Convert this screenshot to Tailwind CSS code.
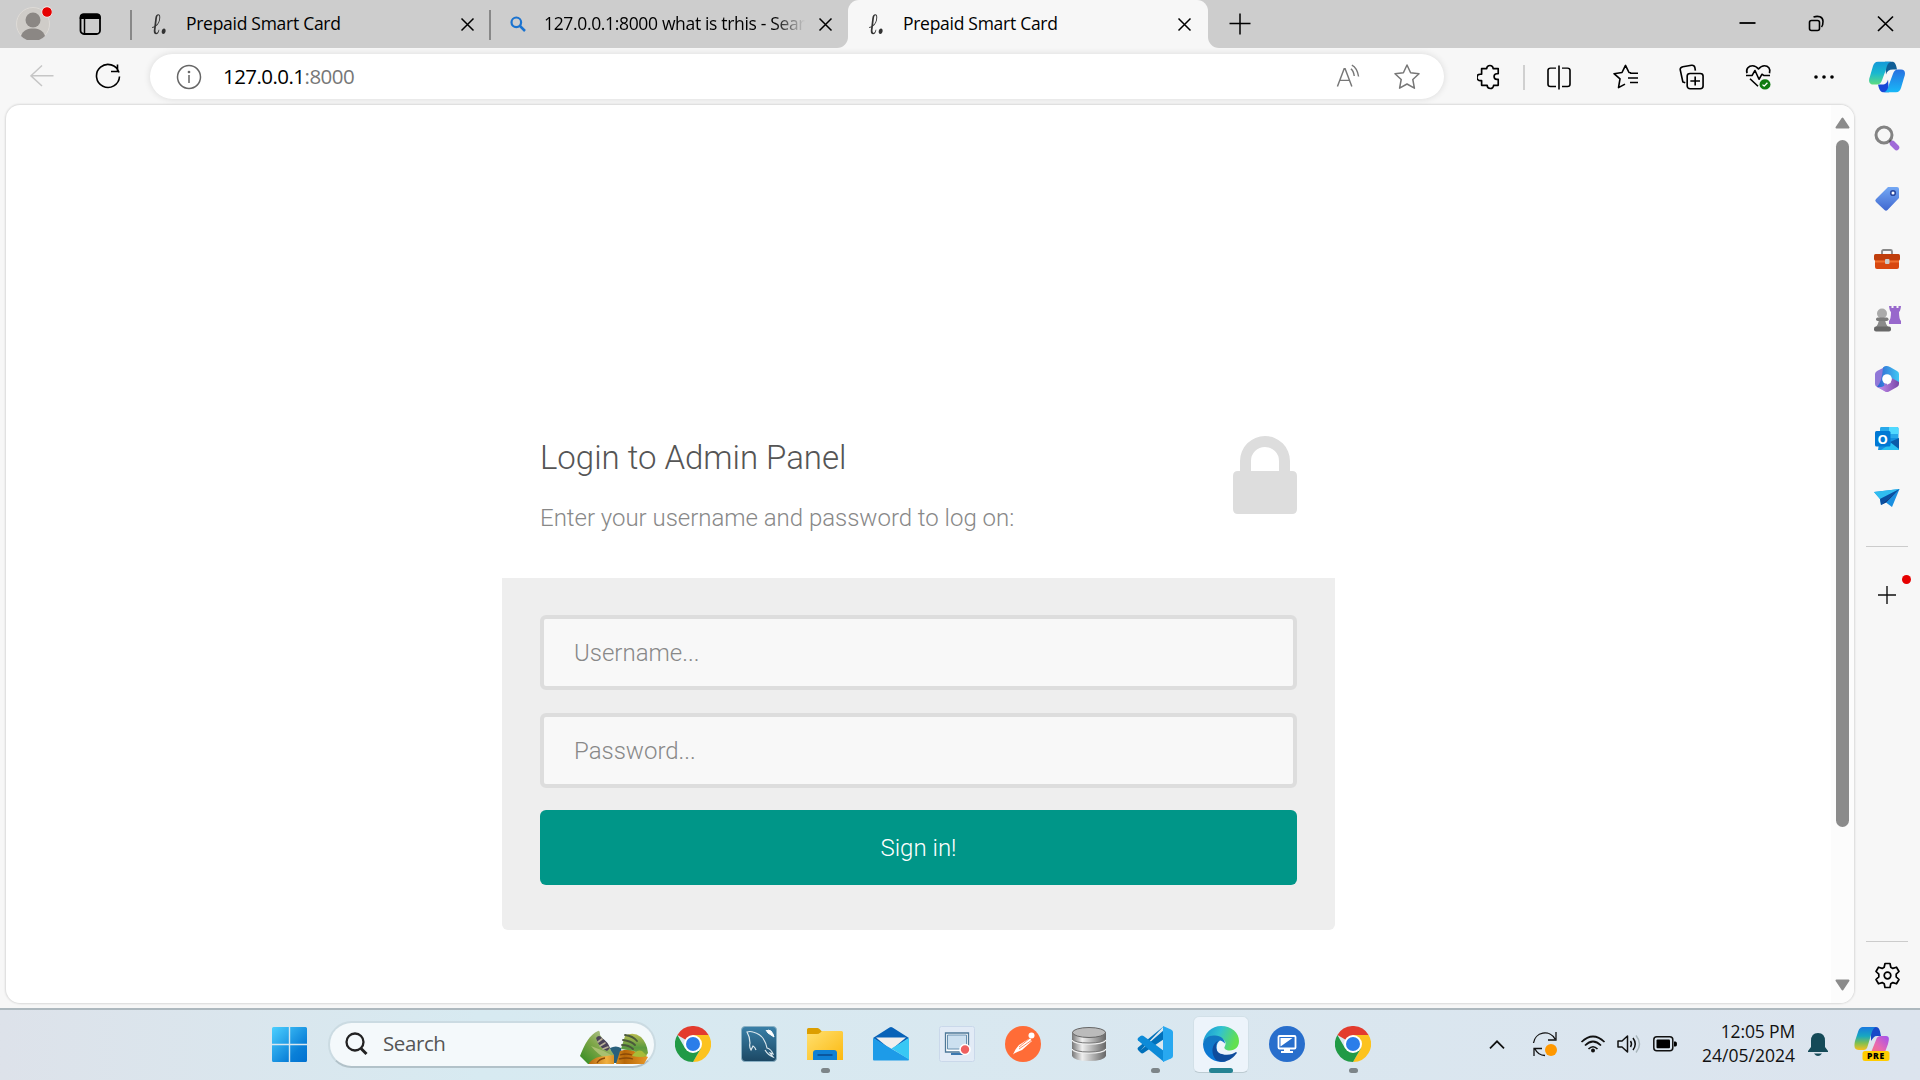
<!DOCTYPE html>
<html lang="en">
<head>
<meta charset="utf-8">
<title>Prepaid Smart Card</title>
<script src="https://cdn.jsdelivr.net/npm/@tailwindcss/browser@4"></script>
</head>
<body class="w-[1920px] h-[1080px] overflow-hidden flex flex-col bg-[#f7f7f7] font-['Open_Sans','Noto_Sans',sans-serif] text-black">

<!-- Tab strip -->
<header class="h-12 shrink-0 bg-[#cdcdcd] flex items-center">
  <div class="w-[130px] h-full flex items-center pl-4 shrink-0">
    <svg class="w-9 h-9 -mt-1" viewBox="0 0 36 36"><circle cx="17" cy="20" r="16.500" fill="#cfccc8" stroke="#dedbd7"/><circle cx="17" cy="16" r="7.500" fill="#8b8784"/><path d="M5 32C7 26 12 24.500 17 24.500S27 26 29 32A16.500 16.500 0 0 1 5 32Z" fill="#8b8784"/><circle cx="31" cy="8" r="5.300" fill="#e60000" stroke="#eee" stroke-width="1"/></svg>
    <svg class="w-6 h-6 ml-[26px]" viewBox="0 0 24 24"><rect x="2.500" y="2.500" width="19.500" height="19.500" rx="3.500" fill="none" stroke="#000" stroke-width="1.800"/><path d="M1.700 7V5a3.500 3.500 0 0 1 3.500-3.500h14A3.500 3.500 0 0 1 22.800 5v2Z"/><path d="M6.500 7v15" stroke="#000" stroke-width="1.500"/></svg>
  </div>
  <div class="w-[2px] h-[30px] mt-0.5 bg-[#888] shrink-0"></div>
  <div class="w-[358px] h-full shrink-0 flex items-center pl-5 pr-4">
    <span class="w-[34px] h-full leading-[47px] font-['DejaVu_Serif',serif] italic font-bold text-[21px] tracking-[-1px] text-[#333] scale-y-140">ℓ.</span>
    <span class="flex-1 -mt-0.5 text-[17.5px] tracking-[-0.28px] whitespace-nowrap">Prepaid Smart Card</span>
    <svg class="w-[15px] h-[15px] mt-px mr-[-1px]" viewBox="0 0 15 15"><path d="M1.500 1.500l12 12M13.500 1.500l-12 12" stroke="#000" stroke-width="1.500"/></svg>
  </div>
  <div class="w-[2px] h-[30px] mt-0.5 -ml-px bg-[#888] shrink-0"></div>
  <div class="w-[357px] h-full shrink-0 flex items-center pl-[19px] pr-[15px]">
    <svg class="w-4 h-4 mr-[18px]" viewBox="0 0 16 16"><circle cx="6.300" cy="6.300" r="4.800" fill="none" stroke="#1a73d0" stroke-width="2.200"/><path d="M10 10l5 5" stroke="#1a73d0" stroke-width="2.500"/></svg>
    <span class="flex-1 -mt-0.5 overflow-hidden text-[17.5px] tracking-[-0.34px] whitespace-nowrap [mask-image:linear-gradient(to_right,black_88%,transparent)]">127.0.0.1:8000 what is trhis - Search</span>
    <svg class="w-[15px] h-[15px] ml-[13px] mt-px" viewBox="0 0 15 15"><path d="M1.500 1.500l12 12M13.500 1.500l-12 12" stroke="#000" stroke-width="1.500"/></svg>
  </div>
  <div class="w-[360px] h-full shrink-0 flex items-center pl-[21px] pr-[17px] bg-[#f7f7f7] rounded-t-[11px] relative">
    <svg class="absolute -left-[11px] bottom-0 w-[11px] h-[11px]" viewBox="0 0 11 11"><path d="M11 0v11H0A11 11 0 0 0 11 0Z" fill="#f7f7f7"/></svg>
    <svg class="absolute -right-[11px] bottom-0 w-[11px] h-[11px]" viewBox="0 0 11 11"><path d="M0 0v11h11A11 11 0 0 1 0 0Z" fill="#f7f7f7"/></svg>
    <span class="w-[34px] h-full leading-[47px] font-['DejaVu_Serif',serif] italic font-bold text-[21px] tracking-[-1px] text-[#333] scale-y-140">ℓ.</span>
    <span class="flex-1 -mt-0.5 text-[17.5px] tracking-[-0.28px] whitespace-nowrap">Prepaid Smart Card</span>
    <svg class="w-[15px] h-[15px] mt-px mr-[-1px]" viewBox="0 0 15 15"><path d="M1.500 1.500l12 12M13.500 1.500l-12 12" stroke="#000" stroke-width="1.500"/></svg>
  </div>
  <svg class="w-[22px] h-[22px] ml-[21px] -mt-px shrink-0" viewBox="0 0 22 22"><path d="M11 .500v21M.500 10.500h21" stroke="#000" stroke-width="1.500"/></svg>
  <div class="flex ml-auto items-center">
    <svg class="w-[69px] h-12" viewBox="0 0 69 48"><path d="M26.500 23h16" stroke="#000" stroke-width="1.800"/></svg>
    <svg class="w-[69px] h-12" viewBox="0 0 69 48" fill="none" stroke="#000" stroke-width="1.600"><rect x="27.500" y="20.500" width="10" height="10" rx="2"/><path d="M31.500 17c4.500-1.500 9.500-.500 9.500 4.500 0 3 0 4-1.500 5.500"/></svg>
    <svg class="w-[69px] h-12" viewBox="0 0 69 48"><path d="M27 16.500l15 14.500M42 16.500l-15 14.500" stroke="#000" stroke-width="1.700"/></svg>
  </div>
</header>

<!-- Toolbar -->
<nav class="h-[57px] shrink-0 flex items-start">
  <svg class="w-6 h-6 ml-[30px] mt-4" viewBox="0 0 24 24" fill="none" stroke="#c6c6c6" stroke-width="1.500"><path d="M23.500 11.800H.800M12 1.500L1 11.800 12 22"/></svg>
  <svg class="w-[26px] h-[26px] ml-[41px] mt-[15px]" viewBox="0 0 26 26" fill="none" stroke="#000" stroke-width="1.600"><path d="M24 9.500A11.500 11.500 0 1 0 24.500 13.500M22.500 1.500v7H16"/></svg>
  <div class="w-[1294px] h-[45px] mt-1.5 ml-[29px] bg-white rounded-full shadow-[0_0_7px_rgba(0,0,0,0.12)] flex items-center pl-[26px]">
    <svg class="w-[26px] h-[26px]" viewBox="0 0 26 26" fill="none" stroke="#666" stroke-width="1.500"><circle cx="13" cy="13" r="11.500"/><path d="M13 11v8"/><circle cx="13" cy="8" r=".600" fill="#666"/></svg>
    <span class="ml-[21px] -mt-px flex-1 text-[20.5px] tracking-[-0.55px] whitespace-nowrap leading-none">127.0.0.1<span class="text-[#777]">:8000</span></span>
    <svg class="w-6 h-[25px] mr-[34px]" viewBox="0 0 24 26" fill="none" stroke="#777" stroke-width="1.500"><path d="M1 23.500L8 5h1l7 18.500M3.500 17h10M15 5c2 1.500 3 3.500 3.500 7.500M16 1.200c4 2 6 6 7 11.800"/></svg>
    <svg class="w-[26px] h-[26px] mr-[24px]" viewBox="0 0 26 26" fill="none" stroke="#777" stroke-width="1.500" stroke-linejoin="round"><path d="M13 1l3.600 7.700 8.400 1.100-6.200 5.700 1.600 8.700L13 20l-7.400 4.200 1.600-8.700L1 9.800l8.400-1.100Z"/></svg>
  </div>
  <svg class="w-6 h-[26px] ml-[33px] mt-4" viewBox="0 2 26 28" fill="none" stroke="#000" stroke-width="1.800" stroke-linejoin="round"><path d="M5 7h5.500a3.500 3.500 0 1 1 7 0H23v5.500h-1.500a3 3 0 0 0 0 6H23V25h-5a3.500 3.500 0 0 1-7 0H5v-5H3.500a3.500 3.500 0 0 1 0-7H5Z"/></svg>
  <div class="w-[2px] h-[25px] mt-[17px] ml-[22px] bg-[#d0d0d0]"></div>
  <svg class="w-[26px] h-[25px] mt-[17px] ml-[21px]" viewBox="0 0 26 28" preserveAspectRatio="none" fill="none" stroke="#000" stroke-width="1.600"><path d="M10 3.500H4.500a2.500 2.500 0 0 0-2.500 2.500v15.500A2.500 2.500 0 0 0 4.500 24H10M16 3.500h5.500A2.500 2.500 0 0 1 24 6v15.500a2.500 2.500 0 0 1-2.500 2.500H16M13 .500v27"/></svg>
  <svg class="w-[26px] h-[26px] mt-4 ml-[41px]" viewBox="0 0 26 28" preserveAspectRatio="none" fill="none" stroke="#000" stroke-width="1.600" stroke-linejoin="round"><path d="M18 9.500l-2-.300L12.500 1.500 9 9.200l-8 1.200 6 5.600-1.500 9.500 6.500-3.800M17 10h8M15 15h10M17 20h8"/></svg>
  <svg class="w-[26px] h-[26px] mt-4 ml-10" viewBox="0 0 27 29" preserveAspectRatio="none" fill="none" stroke="#000" stroke-width="1.700"><rect x="8.500" y="10.500" width="16.500" height="17" rx="3"/><path d="M16.800 14v10M11.800 19h10M6.500 21L4 20 1.300 6.500C1 4.500 2 3.500 4 3l9-1.500c2-.300 3 .500 3.500 2.500l.500 3.500"/></svg>
  <svg class="w-[27px] h-[27px] mt-[15px] ml-10" viewBox="0 0 27 29" preserveAspectRatio="none" fill="none" stroke="#000" stroke-width="1.600" stroke-linejoin="round"><path d="M2 11C.500 6 4 3 7.500 3c3 0 4.500 1.500 6 3.500C15 4.500 16.500 3 19.500 3 23 3 26 6 24.500 11M1 13.500h6l3-5.500 4 9.500 3-5.500 2 1.500h6M5 17l8 8"/><circle cx="20" cy="23" r="5.500" fill="#107c10" stroke="none"/><path d="M17.500 23.200l1.700 1.700 3.200-3.700" stroke="#fff" stroke-width="1.300"/></svg>
  <svg class="w-6 h-6 mt-[17px] ml-10" viewBox="0 0 24 24"><circle cx="4" cy="12" r="1.800"/><circle cx="12" cy="12" r="1.800"/><circle cx="20" cy="12" r="1.800"/></svg>
  <svg class="w-9 h-[32px] mt-[13px] ml-[33px]" viewBox="0 0 36 38" preserveAspectRatio="none">
    <defs><linearGradient id="ca" x1="0" y1="0" x2="0" y2="1"><stop offset="0" stop-color="#1498d8"/><stop offset=".5" stop-color="#19b8d0"/><stop offset="1" stop-color="#5edc80"/></linearGradient><linearGradient id="cb" x1="0" y1="0" x2="0" y2="1"><stop offset="0" stop-color="#2870e0"/><stop offset="1" stop-color="#18b8f8"/></linearGradient></defs>
    <path d="M16 1h7c3 0 4 3 5 9h-4c-4 0-6 2-7 6Z" fill="#105e96"/><path d="M20 37h-6c-3 0-4-4-5-9h4c4 0 5-2 6-6Z" fill="#1848d8"/>
    <path d="M9 1h13c-3 1-4 4-5 9l-4 13c-1 3-2 5-5 5H5c-5 0-6-4-4-10L4 6c1-3 2-5 5-5Z" fill="url(#ca)"/>
    <path d="M27 37H15c3-1 4-4 5-9l4-13c1-3 2-5 5-5h3c4 0 5 4 3 10l-3 12c-1 3-2 5-5 5Z" fill="url(#cb)"/>
  </svg>
</nav>

<div class="h-[903px] shrink-0 flex">
  <!-- Web page -->
  <main class="ml-1.5 w-[1848px] h-[898px] bg-white rounded-[14px] shadow-[0_0_2px_1px_rgba(0,0,0,0.12)] flex overflow-hidden">
    <div class="w-[1825px] pl-[496px] pt-[315px] font-['Roboto',sans-serif] font-light">
      <section class="w-[833px]">
        <div class="h-[158px] px-[38px] flex justify-between">
          <div class="pt-[19px]">
            <h1 class="text-[33px] leading-[40px] mt-[-1px] tracking-[-0.03px] text-[#555] whitespace-nowrap">Login to Admin Panel</h1>
            <p class="mt-[18px] text-[24px] leading-[44px] tracking-[-0.02px] text-[#888] whitespace-nowrap">Enter your username and password to log on:</p>
          </div>
          <svg class="w-16 h-[78px] mt-4" viewBox="0 0 64 78"><path fill="#ddd" fill-rule="evenodd" d="M7 35V25a25 25 0 0 1 50 0v10h2q5 0 5 5v33q0 5-5 5H5q-5 0-5-5V40q0-5 5-5ZM18 35h28V25a14 14 0 0 0-28 0Z"/></svg>
        </div>
        <form class="h-[352px] bg-[#eee] rounded-b-[6px] px-[38px] pt-[37px] flex flex-col">
          <input type="text" placeholder="Username..." class="h-[75px] w-full border-4 border-[#ddd] rounded-[6px] bg-[#f8f8f8] px-[30px] text-[24px] placeholder:text-[#888]">
          <input type="text" placeholder="Password..." class="mt-[23px] h-[75px] w-full border-4 border-[#ddd] rounded-[6px] bg-[#f8f8f8] px-[30px] text-[24px] placeholder:text-[#888]">
          <button type="button" class="mt-[22px] h-[75px] w-full rounded-[6px] bg-[#009688] text-white text-[24px]">Sign in!</button>
        </form>
      </section>
    </div>
    <div class="w-[23px] bg-[#fcfcfc] flex flex-col items-center pt-[12px]">
      <svg class="w-[15px] h-[12px] shrink-0" viewBox="0 0 15 12"><path d="M7.500 1.500L13.500 10.500h-12Z" fill="#8b8b8b" stroke="#8b8b8b" stroke-width="2" stroke-linejoin="round"/></svg>
      <div class="w-[13px] h-[687px] mt-[11px] rounded-full bg-[#8b8b8b]"></div>
      <svg class="w-[15px] h-[12px] mt-auto mb-[12px] shrink-0" viewBox="0 0 15 12"><path d="M7.500 10.500L13.500 1.500h-12Z" fill="#8b8b8b" stroke="#8b8b8b" stroke-width="2" stroke-linejoin="round"/></svg>
    </div>
  </main>

  <!-- Edge sidebar -->
  <aside class="w-[66px] h-full flex flex-col items-center">
    <div class="flex flex-col items-center gap-8 pt-[19px]">
      <svg class="w-7 h-7 mb-px" viewBox="0 0 28 28"><circle cx="11" cy="11" r="8" fill="none" stroke="#838383" stroke-width="3"/><path d="M16.500 16.500l3.500 3.500" stroke="#555" stroke-width="2.500"/><path d="M19.500 19.500l4 4" stroke="#a06ad8" stroke-width="5.500" stroke-linecap="round"/></svg>
      <svg class="w-7 h-7" viewBox="0 0 28 28"><defs><linearGradient id="tg" x1="0" y1="0" x2="0" y2="1"><stop stop-color="#74a8f4"/><stop offset="1" stop-color="#4068d0"/></linearGradient></defs><path d="M15 2h9q2 0 2 2v9L14.500 25q-1.500 1.500-3 0L3 17q-1.500-1.500 0-3Z" fill="url(#tg)"/><circle cx="20" cy="8" r="2.300" fill="#fff" stroke="#2848a0" stroke-width="1.600"/></svg>
      <svg class="w-7 h-7" viewBox="0 -1 28 28"><path d="M9 9V5.500q0-1.500 1.500-1.500h7q1.500 0 1.500 1.500V9" fill="none" stroke="#888" stroke-width="1.800"/><path d="M2 13h24v8q0 2-2 2H4q-2 0-2-2Z" fill="#d84810"/><rect x="1" y="8" width="26" height="6.500" rx="1.500" fill="#c03e0c"/><path d="M2 14.500h24v2H2Z" fill="#f07030"/><rect x="12" y="13" width="4.500" height="5" rx="1" fill="#ccc"/></svg>
      <svg class="w-7 h-7" viewBox="0 0 28 28"><circle cx="9" cy="8.500" r="5" fill="#aaa"/><path d="M6 13h6q0 6 4 10H2q4-4 4-10Z" fill="#8a8a8a"/><rect x="3" y="12.500" width="12.500" height="3.500" rx="1.700" fill="#7b7b7b"/><rect x="1" y="21.500" width="17" height="5" rx="2" fill="#686868"/><path d="M16 1h2.500v2h2V1h3v2h2V1H28q-.500 5-2 6 0 7 2 9v3H16v-3q2-2 2-9-1.500-1-2-6Z" fill="#9868cc"/></svg>
      <svg class="w-7 h-7" viewBox="0 0 28 28"><defs><linearGradient id="mb" x1="0" y1="0" x2="1" y2="0"><stop stop-color="#3060d0"/><stop offset="1" stop-color="#40c8f4"/></linearGradient><linearGradient id="mp" x1="0" y1="0" x2="1" y2="0"><stop stop-color="#c890f0"/><stop offset="1" stop-color="#7848a8"/></linearGradient></defs><path d="M14 1L4 6Q2 7.500 2 9v10q0 2 2 3l10 5V14Z" fill="#9078d8"/><path d="M10 2.500Q13 0 17 2l7 4q2 1 2 3v9l-8-5-7-3v11q-4 2-7 1 5-5 6-19.500Z" fill="url(#mb)"/><path d="M26 17v2q0 2-2 3l-8 4.500q-2 1-4 0L4.500 22q4 1 7-1l6-3 1-5Z" fill="url(#mp)"/><circle cx="14" cy="14" r="4.800" fill="#fff"/></svg>
      <svg class="w-7 h-7" viewBox="0 0 28 28"><path d="M8 2h16q1.500 0 1.500 1.500V16H7V3.500Q7 2 8 2Z" fill="#28a8ea"/><path d="M16 2h8q1.500 0 1.500 1.500V9H16Z" fill="#50d9ff"/><path d="M7 13h19v12H5Z" fill="#1490df"/><path d="M26 13L8 25h17q1 0 1-1Z" fill="#28c0f0"/><path d="M26 13v11l-9-7Z" fill="#0a5ba8"/><rect x="2" y="6" width="15.500" height="15.500" rx="1.500" fill="#0078d4"/><text x="9.700" y="18.500" font-size="13" font-weight="700" fill="#fff" text-anchor="middle" font-family="Open Sans">O</text></svg>
      <svg class="w-7 h-7" viewBox="0 0 28 28"><path d="M1 7l25.500-3L19 22l-6-4.500L8 20l-1-6Z" fill="#1a8fe0"/><path d="M1 7l25.500-3L7 14Z" fill="#30bdf0"/><path d="M26.500 4L7 14l1 6Z" fill="#0a4fa0"/><path d="M26.500 4L8 20l5-2.500Z" fill="#12357a"/></svg>
    </div>
    <div class="w-[42px] h-px bg-[#ccc] mt-[33px]"></div>
    <div class="relative mt-[39px] -ml-px">
      <svg class="w-[18px] h-[18px]" viewBox="0 0 18 18"><path d="M9 0v18M0 9h18" stroke="#111" stroke-width="1.400"/></svg>
      <span class="absolute -top-[11px] left-[24px] w-[9px] h-[9px] rounded-full bg-[#e60000]"></span>
    </div>
    <div class="w-[42px] h-px bg-[#ccc] mt-auto mb-[20px]"></div>
    <svg class="w-[27px] h-[27px] mb-[19px]" viewBox="0 0 27 27" fill="none" stroke="#000" stroke-width="1.700" stroke-linejoin="round"><path d="M11 1.500h5l.800 3.700 2 1.200 3.700-1.200 2.500 4.300-2.800 2.600v2.800l2.800 2.600-2.500 4.300-3.700-1.200-2 1.200-.800 3.700h-5l-.800-3.700-2-1.200-3.700 1.200L2 17.500l2.800-2.600v-2.800L2 9.500l2.500-4.300 3.700 1.200 2-1.200Z"/><circle cx="13.500" cy="13.500" r="3.300"/></svg>
  </aside>
</div>

<!-- Taskbar -->
<footer class="h-[72px] pb-0.5 shrink-0 border-t-2 border-[#adb8be] bg-linear-to-r from-[#dde2ea] via-[#d7eaf1] via-25% to-[#dce4ee] flex items-center">
  <svg class="w-[35px] h-[35px] ml-[272px] shrink-0" viewBox="0 0 35 35"><defs><linearGradient id="win" gradientUnits="userSpaceOnUse" x1="0" y1="0" x2="35" y2="35"><stop stop-color="#4cd0ff"/><stop offset=".7" stop-color="#0a80d8"/><stop offset="1" stop-color="#0070d0"/></linearGradient></defs><path fill="url(#win)" d="M1.500 0H16.800v16.800H0V1.500Q0 0 1.500 0ZM18.200 0H33.500Q35 0 35 1.500V16.800H18.200ZM0 18.200h16.800V35H1.500Q0 35 0 33.500ZM18.200 18.200H35V33.500Q35 35 33.500 35H18.200Z"/></svg>
  <div class="w-[328px] h-[47px] ml-[21px] shrink-0 rounded-full bg-[#f4f9fb] border-2 border-[#cbdbe2] border-b-[#b2c2c9] flex items-center pl-[15px]">
    <svg class="w-6 h-6" viewBox="0 0 24 24" fill="none" stroke="#222"><circle cx="10" cy="10" r="8.500" stroke-width="2.300"/><path d="M16 16.500l5.500 5.500" stroke-width="3"/></svg>
    <span class="ml-[14px] -mt-px flex-1 text-[20.5px] tracking-[-0.4px] text-[#555]">Search</span>
    <svg class="w-[70px] h-[34px] mr-[5px] mt-[6px]" viewBox="0 0 70 34">
      <defs>
        <linearGradient id="hl" x1="0" y1="1" x2="1" y2="0"><stop stop-color="#2c8a1e"/><stop offset=".5" stop-color="#7fa648"/><stop offset="1" stop-color="#c4cfae"/></linearGradient>
        <linearGradient id="hr" x1="0" y1="0" x2="0" y2="1"><stop stop-color="#b8bc50"/><stop offset=".6" stop-color="#5a9a40"/><stop offset="1" stop-color="#8aac38"/></linearGradient>
        <linearGradient id="ho" x1="0" y1="0" x2="1" y2="0"><stop stop-color="#b86810"/><stop offset=".3" stop-color="#f0b040"/><stop offset=".6" stop-color="#b86808"/><stop offset="1" stop-color="#e89828"/></linearGradient>
      </defs>
      <path d="M31 18q6-3 11 0l2 15H34Z" fill="#28607c"/>
      <path d="M1 26C5 15 11 4 19 1q2-1 2 4l6 8 8 12-8 8-18 1Z" fill="url(#hl)"/>
      <path d="M17 8q3-4 6 0 6 4 8 10l-3 3q-8-3-11-13Z" fill="#4b4358"/><path d="M19 12l4-3M21 16l5-3M24 19l5-2" stroke="#b8b098" stroke-width="1.600" stroke-linecap="round"/>
      <path d="M12 16q12 4 22 10l-5 4Q18 24 12 16Z" fill="#a9c070"/>
      <path d="M10 33q6-7 17-7l8-1v9H10ZM37 34l4-13q8-3 14 0l14 6-4 7Z" fill="url(#ho)"/>
      <path d="M18 33q2-4 8-5M41 25q6-2 12 0M40 29q8-2 14 0" fill="none" stroke="#8a4a08" stroke-width="1.300"/>
      <path d="M42 19l4-13q8-5 16 1 6 6 7 16l-3 4-11-6Z" fill="url(#hr)"/>
      <path d="M46 5q8 1 12 6M44 10q8 1 12 5M43 15q7 0 11 4" fill="none" stroke="#4a5a3c" stroke-width="1.800" stroke-linecap="round"/>
      <path d="M53 26q5-7 10-5l5 5q-6 2-15 0Z" fill="#a8bc38"/>
    </svg>
  </div>

  <div class="flex ml-1 h-full items-center shrink-0 [&>div]:w-[66px] [&>div]:h-full [&>div]:flex [&>div]:justify-center [&>div]:items-center [&>div]:relative">
    <div><svg class="w-9 h-9" viewBox="0 0 36 36"><path d="M18 18L2.400 9A18 18 0 0 1 33.600 9Z" fill="#e33b2e"/><path d="M18 9h15.600A18 18 0 0 1 18 36L25.800 22.500Z" fill="#fcc31e"/><path d="M2.400 9A18 18 0 0 0 18 36l7.800-13.500L10.200 22.500Z" fill="#219a46"/><circle cx="18" cy="18" r="9" fill="#fff"/><circle cx="18" cy="18" r="7" fill="#2b7de9"/></svg></div>
    <div><svg class="w-9 h-9" viewBox="0 0 36 36"><defs><linearGradient id="my" x1="0" y1="0" x2="0" y2="1"><stop stop-color="#3a80a8"/><stop offset="1" stop-color="#1c4864"/></linearGradient></defs><rect x=".500" y=".500" width="35" height="35" rx="3.500" fill="url(#my)" stroke="#8ab0c4"/><path d="M15 24q-1-3-3-4-1 2-2 4-2-3-1-7 0-6-3-11 3-1 6 0 8 2 11 8 2 3 3 8 4 1 6 6l-3-1 3 4q-5-2-8-7" fill="none" stroke="#dce8ee" stroke-width="1.200"/><path d="M25 4l2 3 3 2 3 2-1-3-2-3-3-1" fill="#fff" stroke="#fff"/></svg></div>
    <div><svg class="w-9 h-9" viewBox="0 0 36 36"><defs><linearGradient id="fo" x1="0" y1="0" x2="1" y2="1"><stop stop-color="#ffe070"/><stop offset="1" stop-color="#fcb910"/></linearGradient></defs><path d="M0 3.500Q0 2 1.500 2h9q1.500 0 2.500 1.500L15.500 6 12 8H0Z" fill="#dc9e00"/><path d="M0 8h10q2 0 3.500-1.500L15 5h19.500Q36 5 36 6.500V34H0Z" fill="url(#fo)"/><path d="M6 34v-7q0-3 3-3h18q3 0 3 3v7Z" fill="#0f80d4"/><path d="M10.500 29h15" stroke="#0a4f94" stroke-width="1.700"/></svg><i class="absolute bottom-[5px] w-[9px] h-[5px] rounded-full bg-[#7d8589]"></i></div>
    <div><svg class="w-9 h-9" viewBox="0 0 36 36"><path d="M0 12L16.500 1.500q1.500-1 3 0L36 12l-18 12Z" fill="#0862b8"/><path d="M3 11.500h30L18 24Z" fill="#f1efee"/><path d="M0 12l36 21q0 1.500-1 1.500H1q-1 0-1-1Z" fill="#1d9be8"/><path d="M36 12v21.500L18.500 22.500Z" fill="#38c8f4"/></svg></div>
    <div><svg class="w-9 h-9" viewBox="0 0 36 36"><rect x=".500" y=".500" width="35" height="35" rx="2" fill="#e2ebf6" stroke="#cad8ea"/><path d="M6.500 7h23v19h-23Z" fill="#fff" stroke="#4e7898" stroke-width="1.300"/><path d="M8.500 9h19v14h-19Z" fill="#cce0f0" stroke="#6890b0"/><path d="M12 28h12" stroke="#3c78b0" stroke-width="2"/><circle cx="26" cy="23.500" r="5" fill="#f06060" stroke="#fff" stroke-width="1.600"/></svg></div>
    <div><svg class="w-9 h-9" viewBox="0 0 36 36"><circle cx="18" cy="18" r="18" fill="#ff6c37"/><circle cx="26.500" cy="9.500" r="3" fill="#fff"/><path d="M25 12l2 3-10 9-7 3-2 1.500 2.500-5L14 19Z" fill="#fff"/><path d="M25 12L14 21M27 14L14 23" stroke="#ff6c37" stroke-width=".8"/></svg></div>
    <div><svg class="w-9 h-9" viewBox="0 0 36 36"><defs><linearGradient id="db" x1="0" y1="0" x2="1" y2="0"><stop stop-color="#777"/><stop offset=".3" stop-color="#eee"/><stop offset="1" stop-color="#666"/></linearGradient></defs><path d="M1 6v24q2 5 17 5t17-5V6Z" fill="url(#db)"/><ellipse cx="18" cy="6.500" rx="16.500" ry="5" fill="#bbb" stroke="#666"/><path d="M1 14q3 4 17 4t17-4M1 23q3 4 17 4t17-4" fill="none" stroke="#eee" stroke-width="1.500"/><path d="M1 13q3 4 17 4t17-4M1 22q3 4 17 4t17-4" fill="none" stroke="#777"/></svg></div>
    <div><svg class="w-9 h-9" viewBox="0 0 36 36"><path d="M3.500 24.500L27 4v9L6.500 27Q5 28 3.500 26.500L1 24Q0 22.500 1 21.500L27 0Z" fill="#0070ba"/><path d="M1 14.500Q0 13 1 12l2.500-2Q5 9 6.500 10L27 25v11L1 14.500Z" fill="#0d8bd8"/><path d="M26 0l8 3.500q2 1 2 2.500v24q0 1.500-2 2.500L26 36Z" fill="#28a8f0"/></svg><i class="absolute bottom-[5px] w-[9px] h-[5px] rounded-full bg-[#7d8589]"></i></div>
    <div><span class="w-[56px] h-[57px] rounded-[6px] bg-[#edf4fb] border border-[#d2e0e8] border-b-[#bccbd2] flex items-center justify-center"><svg class="w-9 h-9" viewBox="0 0 36 36"><defs><linearGradient id="e1" x1="0" y1="0" x2="1" y2=".3"><stop stop-color="#1590d8"/><stop offset=".5" stop-color="#32c2d0"/><stop offset="1" stop-color="#62e050"/></linearGradient><linearGradient id="e2" x1="0" y1="0" x2="0" y2="1"><stop stop-color="#1478c0"/><stop offset="1" stop-color="#0878dc"/></linearGradient></defs><path d="M0 17C1 7 9 0 18 0c11 0 18 7 18 15 0 6-4 9.500-9 9.500-4 0-7-2-5-4.500 2-4-1-8-8-9C7 10 2 12 0 17Z" fill="url(#e1)"/><path d="M0 18C1 12 6 9 12 9.500c6 0 10 4 10 8-2-2-4-3-5-3-5 3-5 13 4 20l2 1C10 38 0 29 0 18Z" fill="url(#e2)"/><path d="M16 14.500c-5 3-4 12 3 13.500 6 2 11 0 14-2 1 0 1 1 0 2-5 7-14 10-20 6-6-7-4-17 3-19.500Z" fill="#0f4c9c"/></svg></span><i class="absolute bottom-[5px] w-[24px] h-[5px] rounded-full bg-[#258393]"></i></div>
    <div><svg class="w-9 h-9" viewBox="0 0 36 36"><circle cx="18" cy="18" r="18" fill="#286ecc"/><rect x="9.500" y="10" width="17" height="12.500" rx="1" fill="none" stroke="#fff" stroke-width="1.800"/><path d="M11.500 20.500V12h12ZM15 23h6v2h3v2H12v-2h3Z" fill="#fff"/></svg></div>
    <div><svg class="w-9 h-9" viewBox="0 0 36 36"><path d="M18 18L2.400 9A18 18 0 0 1 33.600 9Z" fill="#e33b2e"/><path d="M18 9h15.600A18 18 0 0 1 18 36L25.800 22.500Z" fill="#fcc31e"/><path d="M2.400 9A18 18 0 0 0 18 36l7.800-13.500L10.200 22.500Z" fill="#219a46"/><circle cx="18" cy="18" r="9" fill="#fff"/><circle cx="18" cy="18" r="7" fill="#2b7de9"/></svg><i class="absolute bottom-[5px] w-[9px] h-[5px] rounded-full bg-[#7d8589]"></i></div>
  </div>

  <div class="flex ml-auto items-center h-full shrink-0">
    <svg class="w-4 h-[9px]" viewBox="0 0 16 9"><path d="M1 8.300L8 1.300l7 7" fill="none" stroke="#111" stroke-width="1.700"/></svg>
    <svg class="w-[26px] h-[26px] ml-[27px]" viewBox="0 0 26 26" fill="none" stroke="#111" stroke-width="1.300"><path d="M1.500 12A11.500 11.500 0 0 1 23 8M24 1v8h-8M13 24.500A11.500 11.500 0 0 1 3 18M2 25v-7.500h8"/><circle cx="19" cy="19" r="6" fill="#ff9800" stroke="none"/></svg>
    <svg class="w-[26px] h-[18px] ml-[22px]" viewBox="0 0 26 18" fill="none" stroke="#111" stroke-width="1.700"><path d="M1.500 7q11.500-11 23 0M5 10.500q8-8 16 0M8.500 14q4.500-4.500 9 0"/><circle cx="13" cy="15.500" r="2" fill="#111" stroke="none"/></svg>
    <svg class="w-[25px] h-[20px] ml-[11px]" viewBox="0 0 25 20" fill="none" stroke="#111" stroke-width="1.500" stroke-linejoin="round"><path d="M1 7h4l5.500-5v16L5 13H1ZM13.500 7q2 3 0 6M16 4q4.500 6 0 12"/><path d="M19 1.500q7 8.500 0 17" stroke="#a9b6bb"/></svg>
    <svg class="w-6 h-4 ml-[11px]" viewBox="0 0 24 16"><rect x=".800" y=".800" width="19" height="14" rx="3" fill="none" stroke="#111" stroke-width="1.500"/><rect x="3.500" y="3.500" width="13.500" height="8.800" rx="1"/><path d="M21 5.500h1.500q1.500 0 1.500 2.500t-1.500 2.500H21Z"/></svg>
    <div class="w-[118px] -mt-0.5 text-right text-[17.5px] leading-6 text-[#111] whitespace-nowrap"><p class="tracking-[-0.15px]">12:05 PM</p><p>24/05/2024</p></div>
    <svg class="w-5 h-[23px] ml-[13px]" viewBox="0 0 20 23" fill="#154a58"><path d="M10 0q7 0 7 8v6l3 4v1H0v-1l3-4V8q0-8 7-8ZM6 20.500h8q-2 2.500-4 2.500t-4-2.500Z"/></svg>
    <svg class="w-9 h-[36px] ml-[26px] mr-[30px]" viewBox="0 0 36 36"><defs><linearGradient id="c3" x1="0" y1="0" x2="0" y2="1"><stop stop-color="#1878e0"/><stop offset=".4" stop-color="#18a8c0"/><stop offset=".7" stop-color="#80c050"/><stop offset="1" stop-color="#f8c020"/></linearGradient><linearGradient id="c4" x1="1" y1="0" x2="0" y2="1"><stop stop-color="#a050f0"/><stop offset=".5" stop-color="#e868b0"/><stop offset="1" stop-color="#ff7868"/></linearGradient></defs><path d="M17 1h5c3 0 4 3 5 9h-4c-3 0-4 2-6 5Z" fill="#1848c8"/><path d="M10 1h12c-3 1-4 4-5 8l-3 10c-1 4-2 5-5 5H5c-5 0-5-4-4-9L4 6c1-3 2-5 6-5Z" fill="url(#c3)"/><path d="M26 30H14c3-1 3-3 4-6l4-10c1-3 2-4 5-4h5c4 0 3 4 2 8l-3 8Z" fill="url(#c4)"/><rect x="8.500" y="25" width="27" height="10" rx="2.500" fill="#fc0"/><text x="22" y="33" font-size="8.500" font-weight="800" text-anchor="middle" font-family="Open Sans" letter-spacing=".8">PRE</text></svg>
  </div>
</footer>
</body>
</html>
